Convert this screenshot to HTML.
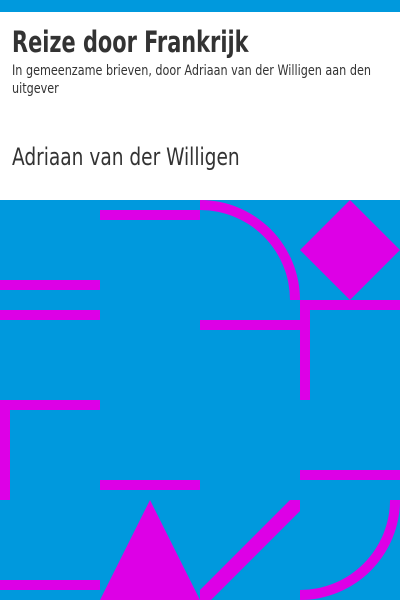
<!DOCTYPE html>
<html><head><style>
body{margin:0;width:400px;height:600px;overflow:hidden;background:#fff;position:relative;font-family:"DejaVu Sans Condensed","DejaVu Sans","Liberation Sans",sans-serif;color:#333}
.top{position:absolute;left:0;top:0;width:400px;height:12px;background:#0099dd}
h1{position:absolute;left:12px;top:24px;margin:0;font-size:29px;font-weight:bold;line-height:36px;color:#333;white-space:nowrap;transform:scaleX(0.8);transform-origin:0 0}
.sub{position:absolute;left:12px;top:62px;width:427px;font-size:14px;line-height:18px;color:#333;transform:scaleX(0.89);transform-origin:0 0}
.au{position:absolute;left:12px;top:142px;font-size:24px;line-height:30px;color:#333;white-space:nowrap;transform:scaleX(0.86);transform-origin:0 0}
svg{position:absolute;left:0;top:200px}
</style></head><body>
<div class="top"></div>
<h1>Reize door Frankrijk</h1>
<div class="sub">In gemeenzame brieven, door Adriaan van der Willigen aan den uitgever</div>
<div class="au">Adriaan van der Willigen</div>
<svg width="400" height="400" viewBox="0 200 400 400">
<rect x="0" y="200" width="400" height="400" fill="#0099dd"/>
<g fill="#dd00e6">
<rect x="100" y="210" width="100" height="10"/>
<path d="M200 200 A100 100 0 0 1 300 300 L290 300 A90 90 0 0 0 200 210Z"/>
<polygon points="350,200 400,250 350,300 300,250"/>
<rect x="0" y="280" width="100" height="10"/>
<rect x="0" y="310" width="100" height="10"/>
<rect x="300" y="300" width="100" height="10"/>
<rect x="300" y="300" width="10" height="100"/>
<rect x="200" y="320" width="100" height="10"/>
<rect x="0" y="400" width="100" height="10"/>
<rect x="0" y="400" width="10" height="100"/>
<rect x="100" y="480" width="100" height="10"/>
<rect x="300" y="470" width="100" height="10"/>
<polygon points="150,500 100,600 200,600"/>
<polygon points="290,500 300,500 300,511 211,600 200,600 200,590"/>
<path d="M390 500 L400 500 A100 100 0 0 1 300 600 L300 590 A90 90 0 0 0 390 500Z"/>
<rect x="0" y="580" width="100" height="10"/>
</g>
</svg>
</body></html>
